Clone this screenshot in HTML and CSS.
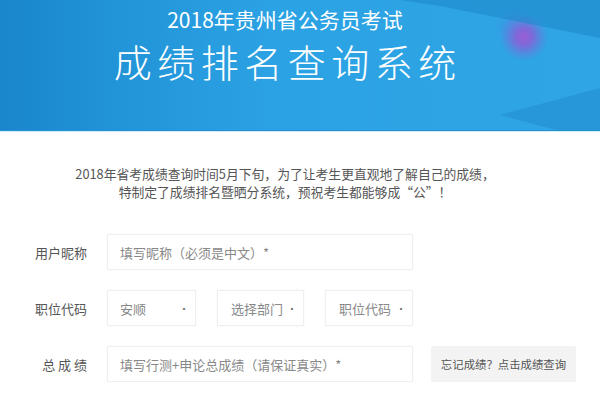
FILE: index.html
```html
<!DOCTYPE html>
<html lang="zh-CN">
<head>
<meta charset="utf-8">
<title>成绩排名查询系统</title>
<link rel="stylesheet" href="styles.css">
</head>
<body>
<header class="banner">
  <div class="t1">2018年贵州省公务员考试</div>
  <div class="t2">成绩排名查询系统</div>
</header>
<p class="intro">2018年省考成绩查询时间5月下旬，为了让考生更直观地了解自己的成绩，<br>特制定了成绩排名暨晒分系统，预祝考生都能够成“公”！</p>
<form class="form">
  <div class="row">
    <label class="label">用户昵称</label>
    <div class="field wide">填写昵称（必须是中文）*</div>
  </div>
  <div class="row">
    <label class="label">职位代码</label>
    <div class="selects">
      <div class="field sel s1"><span>安顺</span><span class="dot">•</span></div>
      <div class="field sel s2"><span>选择部门</span><span class="dot">•</span></div>
      <div class="field sel s3"><span>职位代码</span><span class="dot">•</span></div>
    </div>
  </div>
  <div class="row">
    <label class="label">总 成 绩</label>
    <div class="field wide">填写行测+申论总成绩（请保证真实）*</div>
    <div class="btn">忘记成绩？点击成绩查询</div>
  </div>
</form>
</body>
</html>
```
FILE: styles.css
```css
html, body {
  margin: 0;
  padding: 0;
  background: #fff;
  font-family: "Noto Sans CJK SC", "Noto Sans", sans-serif;
}
.banner {
  position: relative;
  overflow: hidden;
  height: 130px;
  padding-right: 30px;
  border-bottom: 1px solid #2390d0;
  box-shadow: 0 1px 0 #d3e9f7;
  display: flex;
  flex-direction: column;
  align-items: center;
  color: #fff;
  background:
    radial-gradient(circle at 524px 37px, rgba(160,90,210,.95) 0, rgba(140,95,214,.85) 8px, rgba(96,128,222,.6) 17px, rgba(46,163,228,0) 24px),
    radial-gradient(circle at 514px 27px, rgba(80,130,225,.5) 0, rgba(46,163,228,0) 20px),
    linear-gradient(90deg, #1a86cb 0, #2294d8 20%, #2ba2e3 45%, #2fa5e5 100%);
}
.banner::before {
  content: "";
  position: absolute;
  left: 0; top: 0; right: 0; bottom: 0;
  background: #1e86c8;
  opacity: .55;
  clip-path: polygon(400px 0, 600px 0, 600px 38px, 560px 30px, 500px 18px, 440px 6px);
}
.banner::after {
  content: "";
  position: absolute;
  left: 0; top: 0; right: 0; bottom: 0;
  background: #2088c9;
  opacity: .45;
  clip-path: polygon(500px 115px, 600px 88px, 600px 131px, 560px 131px);
}
.t1 {
  position: relative;
  z-index: 1;
  font-size: 21px;
  line-height: 24px;
  margin-top: 7px;
}
.t2 {
  position: relative;
  z-index: 1;
  font-size: 38px;
  line-height: 46px;
  letter-spacing: 5.5px;
  margin-left: 5.5px;
  margin-top: 7px;
  font-weight: 300;
}
.intro {
  margin: 34px 0 0;
  padding-right: 30px;
  text-align: center;
  font-size: 12.8px;
  line-height: 18px;
  color: #555;
}
.form {
  margin-top: 33px;
  display: flex;
  flex-direction: column;
  gap: 20px;
}
.row {
  display: flex;
  align-items: center;
  height: 36px;
}
.label {
  width: 87px;
  text-align: right;
  font-size: 13px;
  color: #555;
  margin-right: 20px;
  white-space: pre;
}
.field {
  box-sizing: border-box;
  height: 36px;
  border: 1px solid #efefef;
  box-shadow: 0 0 2px rgba(0,0,0,.04);
  background: #fff;
  font-size: 13px;
  color: #888;
  display: flex;
  align-items: center;
  padding-left: 12px;
}
.wide { width: 306px; }
.selects {
  display: flex;
  gap: 21px;
}
.sel {
  justify-content: space-between;
  padding-right: 6px;
}
.s1 { width: 89px; }
.s2 { width: 87px; padding-left: 13px; }
.s3 { width: 88px; padding-left: 13px; }
.dot {
  font-size: 10px;
  color: #666;
}
.btn {
  margin-left: 18px;
  box-sizing: border-box;
  width: 145px;
  height: 37px;
  background: #f3f3f3;
  border-radius: 2px;
  display: flex;
  align-items: center;
  justify-content: center;
  font-size: 11.4px;
  color: #555;
}
```
